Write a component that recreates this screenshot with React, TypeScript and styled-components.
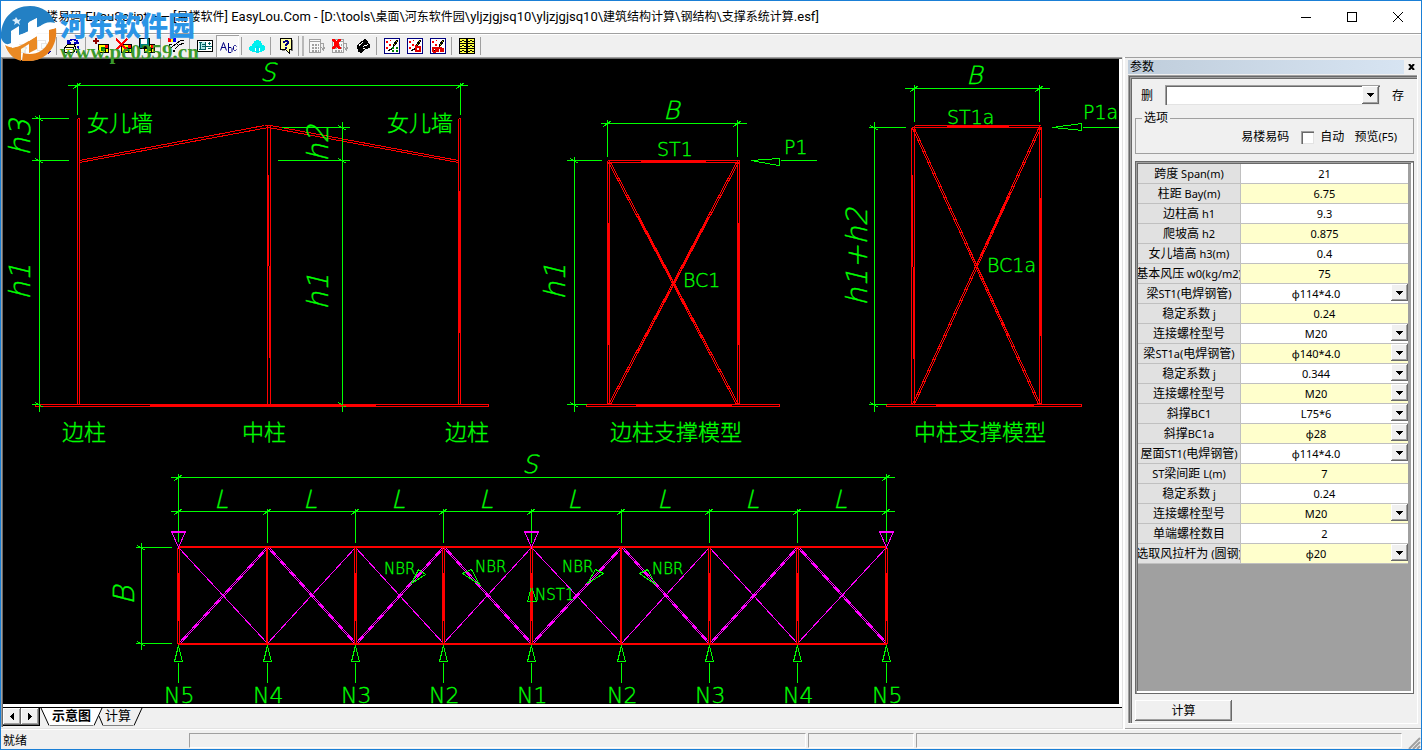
import React, { useState } from "react";
import styled, { createGlobalStyle, css } from "styled-components";

const GlobalStyle = createGlobalStyle`
  * { box-sizing: border-box; }
  body { margin: 0; background: #f0f0f0; }
  body, button, input, select, table {
    font-family: "Noto Sans", "Noto Sans CJK SC", sans-serif;
    font-size: 12px;
    color: #000;
  }
  button { padding: 0; border: 0; background: none; }
`;

const face = "#f0f0f0";
const shade = "#a0a0a0";
const dark = "#696969";

const raised = css`
  background: ${face};
  box-shadow: inset -1px -1px ${dark}, inset 1px 1px #fff, inset -2px -2px ${shade};
`;

/* ---------- window frame ---------- */

const Window = styled.div`
  min-height: 100vh;
  display: flex;
  flex-direction: column;
  border: 1px solid #1a7fd6;
  background: ${face};
`;

const TitleBar = styled.header`
  height: 32px;
  display: flex;
  align-items: center;
  justify-content: space-between;
  background: #fff;
`;

const Title = styled.h1`
  margin: 0;
  padding-left: 33px;
  font-family: Roboto, "Noto Sans CJK SC", sans-serif;
  font-size: 12px;
  line-height: 16px;
  font-weight: 400;
  white-space: nowrap;
  overflow: hidden;
`;

const WindowButtons = styled.div`
  display: flex;
  flex: none;
`;

const WindowButton = styled.button`
  width: 46px;
  height: 30px;
  display: grid;
  place-items: center;
`;

const Toolbar = styled.div`
  height: 24px;
  display: flex;
  align-items: center;
  padding-left: 7px;
  border-top: 1px solid ${shade};
  box-shadow: inset 0 1px #fff;
`;

const ToolButton = styled.button<{ $pressed?: boolean }>`
  width: 23px;
  height: 22px;
  display: grid;
  place-items: center;
  ${(p) => p.$pressed && css`
    background: #f8f8f8;
    box-shadow: inset 1px 1px ${shade}, inset -1px -1px #fff;
  `}
`;

const Separator = styled.span`
  width: 1px;
  height: 18px;
  margin: 0 3px 0 2px;
  background: ${shade};
`;

const Gripper = styled.span`
  width: 6px;
  height: 20px;
  margin: 0 1px;
  border-left: 1px solid ${shade};
  border-right: 2px solid #b8b8b8;
`;

const Workspace = styled.main`
  flex: 1;
  display: flex;
`;

/* ---------- drawing side ---------- */

const View = styled.section`
  flex: 1;
  min-width: 0;
  display: flex;
  flex-direction: column;
  border-right: 2px solid #fff;
  box-shadow: inset -1px 0 #e3e3e3, inset 0 -1px #e3e3e3;
  padding: 0 1px 2px 0;
`;

const Sunken = styled.div`
  flex: 1;
  display: flex;
  flex-direction: column;
  border: solid ${shade};
  border-width: 1px 0 0 1px;
  box-shadow: inset 1px 1px ${dark};
  padding: 1px 0 0 1px;
`;

const Paper = styled.div`
  flex: 1;
  background: #000;
  border: solid #fff;
  border-width: 0 3px 3px 0;
`;

const Drawing = styled.svg`
  display: block;
  width: 100%;
  overflow: visible;
  font-family: "DejaVu Sans", "Noto Sans CJK SC", sans-serif;
  font-weight: 200;
`;

const TabStrip = styled.nav`
  height: 20px;
  display: flex;
  border-top: 1px solid #000;
`;

const ScrollPair = styled.div`
  display: flex;
  height: 18px;
  border: solid #000;
  border-width: 0 1px 1px 0;
`;

const ScrollButton = styled.button`
  width: 18px;
  display: grid;
  place-items: center;
  ${raised}
`;

const Tab = styled.button<{ $active?: boolean }>`
  height: 18px;
  padding: 0 2px 2px;
  line-height: 15px;
  border-bottom: 1px solid #808080;
  background: ${(p) => (p.$active ? "#fff" : face)};
  font-weight: ${(p) => (p.$active ? 700 : 400)};
  font-size: 13px;
`;

/* ---------- parameter side ---------- */

const Panel = styled.aside`
  flex: none;
  width: 296px;
  display: flex;
  flex-direction: column;
  padding: 2px 3px 4px;
  border-top: 1px solid ${shade};
  border-bottom: 1px solid ${shade};
`;

const Caption = styled.div`
  height: 17px;
  display: flex;
  align-items: flex-start;
  justify-content: space-between;
`;

const CaptionText = styled.h2`
  flex: 1;
  margin: 0;
  padding-left: 2px;
  height: 14px;
  font-size: 12px;
  line-height: 14px;
  font-weight: 400;
  background: linear-gradient(90deg, #bfcddb, #d7e4f2);
`;

const CloseButton = styled.button`
  width: 14px;
  height: 14px;
  display: grid;
  place-items: center;
`;

const PanelBody = styled.form`
  flex: 1;
  display: flex;
  flex-direction: column;
  padding: 8px 3px 2px 7px;
  margin-top: -2px;
  border: solid #fff;
  border-width: 0 1px 1px 0;
  box-shadow: inset 1px 1px ${shade}, inset 2px 2px ${dark}, inset 3px 3px ${shade}, inset 4px 4px ${dark};
`;

const PresetRow = styled.div`
  display: flex;
  align-items: center;
  height: 24px;
  gap: 12px;
  padding: 0 10px 0 6px;
`;

const PresetBox = styled.div`
  position: relative;
  flex: 1;
  height: 20px;
  padding: 2px;
  background: #fff;
  box-shadow: inset 1px 1px ${shade}, inset 2px 2px ${dark}, inset -1px -1px #e3e3e3;
`;

const PresetSelect = styled.select`
  appearance: none;
  display: block;
  width: 100%;
  height: 16px;
  border: 0;
  background: none;
`;

const Arrow = styled.span`
  position: absolute;
  right: 0;
  top: 0;
  width: 17px;
  height: 17px;
  display: grid;
  place-items: center;
  pointer-events: none;
  ${raised}
  ${PresetBox} & { right: 1px; top: 1px; height: 18px; }
`;

const Options = styled.fieldset`
  margin: 3px 0 7px;
  padding: 1px 16px 7px 6px;
  height: 44px;
  min-width: 0;
  border: 1px solid ${shade};
`;

const Legend = styled.legend`
  padding: 0 2px;
  line-height: 16px;
`;

const OptionRow = styled.div`
  display: flex;
  justify-content: flex-end;
  align-items: center;
  gap: 10px;
  line-height: 20px;
  a { color: #000; text-decoration: none; margin-right: 2px; }
  label { display: flex; align-items: center; gap: 6px; }
  button { display: flex; line-height: 20px; }
`;

const TickBox = styled.input`
  appearance: none;
  width: 13px;
  height: 13px;
  margin: 0;
  background: #fff;
  box-shadow: inset 1px 1px ${shade}, inset 2px 2px ${dark}, inset -1px -1px #e3e3e3;
`;

const GridBox = styled.div`
  flex: 1;
  padding: 3px 6px 3px 3px;
  background: ${shade};
  box-shadow: inset 1px 1px ${dark}, inset -1px -1px ${dark}, inset 2px 2px ${shade},
    inset -3px -3px #fff, inset 3px 3px ${dark};
`;

const Grid = styled.table`
  width: 100%;
  border-collapse: separate;
  border-spacing: 0;
  table-layout: fixed;
  col:first-child { width: 103px; }
`;

const NameCell = styled.th`
  height: 20px;
  padding: 0;
  line-height: 19px;
  font-weight: 400;
  overflow: hidden;
  background: #e1e1e1;
  border: solid #c0c0c0;
  border-width: 0 1px 1px 0;
`;

/* keeps over-long names centred and clipped on both sides */
const Name = styled.label`
  display: flex;
  justify-content: center;
  align-items: center;
  height: 19px;
  white-space: pre;
`;

const Latin = styled.span<{ $size: number }>`
  font-size: ${(p) => p.$size}px;
`;

const ValueCell = styled.td<{ $tint: boolean }>`
  position: relative;
  height: 20px;
  padding: 0;
  background: ${(p) => (p.$tint ? "#ffffcc" : "#fff")};
  border-bottom: 1px solid #c0c0c0;
`;

const valueText = css`
  display: block;
  width: 100%;
  height: 19px;
  border: 0;
  margin: 0;
  background: none;
  font-size: 11px;
  line-height: 19px;
`;

const ValueInput = styled.input`
  ${valueText}
  padding: 0;
  text-align: center;
`;

const ValueSelect = styled.select`
  ${valueText}
  appearance: none;
  padding: 0 17px 0 0;
  text-align: center;
  text-align-last: center;
`;

const RunButton = styled.button`
  width: 97px;
  height: 21px;
  margin-top: 6px;
  padding-bottom: 1px;
  ${raised}
`;

/* ---------- status bar ---------- */

const StatusBar = styled.footer`
  height: 20px;
  display: flex;
  gap: 2px;
  padding: 3px 0 1px 2px;
  border-top: 1px solid #fff;
`;

const StatusText = styled.span`
  width: 184px;
  line-height: 16px;
`;

const Pane = styled.span<{ $width?: number }>`
  flex: ${(p) => (p.$width ? `0 0 ${p.$width}px` : "1")};
  border: 1px solid;
  border-color: ${shade} #fff #fff ${shade};
`;

const Grip = styled.svg`
  width: 17px;
  height: 16px;
  flex: none;
`;

/* ---------- site stamp over the title bar ---------- */

const Stamp = styled.div`
  position: absolute;
  left: 0;
  top: 5px;
  display: flex;
  gap: 3px;
  pointer-events: none;
`;

const StampText = styled.div`
  display: flex;
  flex-direction: column;
  padding-top: 3px;
`;

const StampName = styled.strong`
  font-family: "Noto Sans CJK SC", sans-serif;
  font-weight: 900;
  font-size: 27px;
  line-height: 33px;
  color: #2b95e6;
`;

const StampUrl = styled.strong`
  font-family: "Liberation Serif", serif;
  font-size: 21px;
  line-height: 22px;
  color: #3c9a2c;
`;

/* ---------- icons ---------- */

const Icon = ({ children, size = 16 }: { children: React.ReactNode; size?: number }) => (
  <svg width={size} height={size} viewBox="0 0 16 16" shapeRendering="crispEdges" aria-hidden="true">
    {children}
  </svg>
);

const DownMark = () => (
  <svg width="7" height="4" viewBox="0 0 7 4" shapeRendering="crispEdges" aria-hidden="true">
    <path d="M0 0h7v1h-1v1h-1v1h-1v1h-1v-1h-1v-1h-1v-1h-1z" />
  </svg>
);

const OpenIcon = () => (
  <Icon>
    <path d="M1 4h5l1 2h6v8H1z" fill="#ffff80" stroke="#000" />
    <path d="M3 14l3-5h9l-3 5z" fill="#c8c800" stroke="#000" />
  </Icon>
);

const FindIcon = () => (
  <Icon>
    <path d="M2 2h8v10H2z" fill="#fff" stroke="#000" />
    <circle cx="9" cy="8" r="3" fill="#aef" stroke="#000" />
    <path d="M11 11l4 4" stroke="#0000a0" strokeWidth="3" />
  </Icon>
);

const RefreshIcon = () => (
  <Icon>
    <path d="M0.5 9.5l3-3h8l-2 3z" fill="#ffffa0" stroke="#000" />
    <path d="M0.5 9.5h9v5h-9z" fill="#fff" stroke="#000" />
    <path d="M9.5 14.5l2-3v-4" fill="none" stroke="#000" />
    <path d="M2 11h6" stroke="#c8c800" />
    <path d="M5 4c1-3 6-3 8-1v3M10 5h5M14 8c1 3 0 5-2 6M4 2v3h3" stroke="#0000c0" strokeWidth="1.6" fill="none" />
  </Icon>
);

const Film = () => (
  <>
    <rect x="5" y="6" width="11" height="9" fill="#000" />
    <rect x="6" y="7" width="6" height="7" fill="#ffff00" />
    <rect x="8" y="9" width="4" height="4" fill="#008000" />
    <rect x="12" y="7" width="3" height="3" fill="#ff0000" />
    <rect x="13" y="11" width="2" height="3" fill="#ffff00" />
  </>
);

const AddIcon = () => (
  <Icon>
    <Film />
    <path d="M0 3h6M3 0v6" stroke="#900000" strokeWidth="2" />
  </Icon>
);

const RemoveIcon = () => (
  <Icon>
    <Film />
    <path d="M0 1l11 11M11 1L0 12" stroke="#ff0000" strokeWidth="2" />
  </Icon>
);

const SaveIcon = () => (
  <Icon>
    <Film />
    <rect x="0.5" y="0.5" width="10" height="10" fill="#008080" stroke="#000" />
    <rect x="2" y="1" width="6" height="5" fill="#fff" />
    <rect x="3" y="8" width="5" height="3" fill="#000" />
  </Icon>
);

const PaletteIcon = () => (
  <Icon>
    <path d="M0 0h3v4H0z" fill="#f00" />
    <path d="M3 0h2v4H3z" fill="#ff0" />
    <path d="M5 0h3v4H5z" fill="#00f" />
    <path d="M4 9L9 5l3-2 4-1M7 11l4-4 5-2M8 5l3 3" stroke="#000" fill="none" />
    <path d="M1 6h3v1H2v2h2v1H1zM1 12h2v2H1zM5 12h2v2H5z" fill="#000" />
  </Icon>
);

const FormIcon = () => (
  <Icon>
    <rect x="0.5" y="2.5" width="15" height="11" fill="#fff" stroke="#000" />
    <path d="M2 4h7v8H2z" fill="#b0e8e8" />
    <path d="M2 4.5h3M3.5 4v8M2 11.5h7M5 6.5h4M5 8.5h4M8.5 4v8" stroke="#006060" />
    <path d="M9 8.5h6M11 5.5h3M12.5 4v3M11 10.5h3" stroke="#006060" />
  </Icon>
);

const AbcIcon = () => (
  <svg width="20" height="16" viewBox="0 0 20 16" fill="none" stroke="#000080" aria-hidden="true">
    <path d="M2.500 12.500l3-8 3 8M3.500 9.500h4" />
    <path d="M10.500 5v9.500h2.500l1-1v-3l-1-1h-2.500" />
    <path d="M18.500 8.500l-1-1h-1l-1 1v3l1 1h1l1-1" />
  </svg>
);

const CloudIcon = () => (
  <Icon>
    <path d="M3 14v-1H1v-1H0V9h1V8h2V6h1V5h1V3h2V2h3v1h2v2h1v2h2v1h1v1h0v3h-1v1h-2v1H9v-3H7v3z" fill="#00f0f0" />
    <path d="M7 8h3v7H7z" fill="#00e0f0" />
    <path d="M6.500 10v3M10.500 10v3" stroke="#fff" />
  </Icon>
);

const HelpIcon = () => (
  <Icon>
    <path d="M2.500 0.500h11v11h-2v4l-4-4h-5z" fill="#ffffa0" stroke="#000" />
    <path d="M14 2h1v11h-2v-1h1zM4 12h3v1H4z" fill="#808080" />
    <path d="M5 3h2V2h3v1h1v3h-1v1H9v1H7V6h1V5h1V4H7v1H5zM7 9h2v2H7z" fill="#000080" />
  </Icon>
);

const Sheet = () => (
  <>
    <rect x="0.5" y="1.5" width="11" height="13" fill="#f8f8f8" stroke={shade} />
    <path d="M1 3.500h10" stroke={shade} />
    <path d="M3 6.500h7M3 9.500h7M3 12.500h7" stroke={shade} strokeWidth="2" strokeDasharray="2 1" />
    <path d="M12 5.500h2.500v6M12.500 9.500l2 3 1-3" stroke={shade} fill="none" />
  </>
);

const SheetIcon = () => <Icon><Sheet /></Icon>;

const SheetDeleteIcon = () => (
  <Icon>
    <Sheet />
    <path d="M1 1l7 10M8 1L1 11" stroke="#ff0000" strokeWidth="3" />
  </Icon>
);

const CameraIcon = () => (
  <Icon>
    <path d="M2 7l5-4 3-2 3 2v2l2 1v4l-4 1-5 4-3-1z" fill="#000" />
    <path d="M4 7.500l4-3M8 8.500l5-2M8 11l2-1" stroke="#fff" fill="none" />
  </Icon>
);

const SketchIcon = ({ mark }: { mark?: string }) => (
  <Icon>
    <rect x="0.5" y="0.5" width="15" height="15" fill="#fff" stroke="#000080" />
    <path d="M2 3h2v2H2zM5 6h2v2H5zM2 9h2v2H2zM6 2h1v1H6z" fill="#ff0000" />
    <path d="M9 7l4-5 1 1-4 5z" fill="#c8c800" stroke="#000" />
    <path d="M4 12.500l3-1 3-4" stroke="#000" fill="none" />
    {!mark && <path d="M8 9h2v2H8zM12 9h2v2h-2zM8 12h2v2H8zM12 12h2v2h-2z" fill="#008000" />}
    {mark === "b" && <path d="M9 7v6h4V9H9" stroke="#e00000" strokeWidth="2" fill="none" />}
    {mark === "m" && <path d="M3 14v-4h3v4M8 14v-4h3v4M13 14v-4M3 14h3" stroke="#e00000" strokeWidth="2" fill="none" />}
  </Icon>
);

const TilesIcon = () => (
  <Icon>
    <rect width="16" height="16" fill="#000" />
    {[1, 9].map((x) =>
      [1, 6, 11].map((y) => (
        <g key={`${x}-${y}`}>
          <rect x={x} y={y} width="6" height="4" fill="#ffff40" />
          <path d={`M${x} ${y + 2}h2v1h-2zM${x + 2} ${y + 1}h2v1h-2zM${x + 4} ${y + 2}h2v1h-2z`} fill="#000" />
        </g>
      ))
    )}
  </Icon>
);

const StampLogo = () => (
  <svg width="57" height="57" viewBox="0 0 57 57" aria-hidden="true">
    <circle cx="28" cy="29" r="27" fill="#fff" fillOpacity="0.9" />
    <path d="M1 33C0 14 13 1 30 1c12 0 22 7 25 17-6-2-11 0-16 4l-2 1V13l-9 5v9l-9 3v-9l-8 5v12c-3 2-7 2-10-5z" fill="#2380c4" />
    <path d="M5 40c6 4 13 3 22-3l10-6v13l-8 4v-9l-8 5v12C14 54 8 49 5 40z" fill="#ea8a24" />
    <path d="M56 23c2 18-9 32-26 33h-8l1-8c11 3 21-1 26-12v-11z" fill="#e8821c" />
    <path d="M16 12l2 3 3-1-2 3 1 3-3-2-3 2 1-3-3-2 3-1z" fill="#d9ecfa" />
    <path d="M12 26l7-4v19l-7 2zM29 17l8-4v18l-8 5z" fill="#fff" />
    <path d="M12 31c9 1 18-7 29-10 6-2 10 0 14 3-8-1-14 2-21 6-8 5-15 9-22 8z" fill="#fff" />
  </svg>
);

/* ---------- structural drawing ---------- */

type Seg = [number, number, number, number];
type Note = [number, number, string];

const G = "#00ff00";
const R = "#ff0000";
const M = "#ff00ff";

const nodes = [178, 267, 355, 443, 531, 621, 709, 797, 886];
const nodeNames = ["N5", "N4", "N3", "N2", "N1", "N2", "N3", "N4", "N5"];

const segPath = (list: Seg[]) => list.map(([a, b, c, d]) => `M${a} ${b}L${c} ${d}`).join("");

/* dimension lines with their witness lines */
const dimensions: Seg[] = [
  [67, 85, 467, 85], [77, 82, 77, 114], [460, 82, 460, 114],
  [39, 114, 39, 411], [31, 118, 68, 118], [31, 160, 68, 160], [31, 404, 39, 404],
  [342, 121, 342, 411], [281, 127, 349, 127], [277, 160, 349, 160],
  [600, 123, 746, 123], [607, 119, 607, 156], [737, 119, 737, 156],
  [574, 156, 574, 411], [566, 160, 601, 160], [566, 404, 586, 404],
  [904, 88, 1049, 88], [914, 84, 914, 121], [1039, 84, 1039, 121],
  [874, 121, 874, 411], [868, 127, 905, 127], [868, 404, 886, 404],
  [170, 477, 894, 477], [170, 511, 894, 511], [178, 473, 178, 541], [886, 473, 886, 541],
  [141, 542, 141, 649], [135, 547, 171, 547], [135, 643, 171, 643],
  [780, 160, 816, 160], [1082, 127, 1118, 127],
  ...nodes.slice(1, -1).map((x): Seg => [x, 508, x, 542]),
  ...nodes.map((x): Seg => [x, 662, x, 682]),
];

const risingTicks = [
  [77, 85], [460, 85], [607, 123], [737, 123], [914, 88], [1039, 88], [178, 477], [886, 477],
  ...nodes.map((x) => [x, 511]),
];
const fallingTicks = [
  [39, 118], [39, 160], [39, 404], [342, 127], [342, 160], [342, 404],
  [574, 160], [574, 404], [874, 127], [874, 404], [141, 547], [141, 643],
];

/* members drawn as two parallel lines */
const members: Seg[] = [
  [77, 118, 77, 404], [79, 118, 79, 404], [77, 118, 79, 118],
  [458, 118, 458, 404], [460, 118, 460, 404], [458, 118, 460, 118],
  [267, 125, 267, 404], [270, 125, 270, 404],
  [79, 160, 264, 125], [79, 162, 268, 127], [264, 125, 270, 125], [270, 125, 458, 160], [268, 127, 458, 162],
  [35, 404, 488, 404], [35, 406, 488, 406], [35, 404, 35, 406], [488, 404, 488, 406],
  [607, 160, 739, 160], [607, 162, 739, 162], [607, 160, 607, 404], [609, 160, 609, 404],
  [737, 160, 737, 404], [739, 160, 739, 404],
  [608, 162, 736, 404], [610, 162, 738, 404], [736, 162, 608, 404], [738, 162, 610, 404],
  [586, 404, 779, 404], [586, 406, 779, 406], [586, 404, 586, 406], [779, 404, 779, 406],
  [914, 125, 1040, 125], [911, 127, 1041, 127], [911, 127, 911, 404], [914, 125, 914, 404],
  [1039, 125, 1039, 404], [1041, 127, 1041, 404],
  [912, 128, 1038, 404], [914, 128, 1040, 404], [1038, 128, 912, 404], [1040, 128, 914, 404],
  [886, 404, 1081, 404], [886, 406, 1081, 406], [886, 404, 886, 406], [1081, 404, 1081, 406],
  [177, 546, 886, 546], [177, 547, 886, 547], [177, 643, 886, 643], [177, 644, 886, 644],
  ...nodes.flatMap((x): Seg[] => {
    const right = x === 267 || x === 621 ? x : x + 1;
    return [[x - 1, 547, x - 1, 643], [right, 547, right, 643]];
  }),
];

/* stretches where the two lines run together */
const solids: Seg[] = [
  [459, 190, 459, 332], [268, 174, 268, 265], [269, 265, 269, 357], [149, 405, 375, 405],
  [640, 161, 705, 161], [608, 222, 608, 344], [738, 222, 738, 344], [635, 405, 731, 405],
  [946, 126, 1008, 126], [912, 174, 912, 266], [913, 266, 913, 358], [1040, 197, 1040, 335],
  [935, 405, 1033, 405],
  [638, 217, 709, 350], [708, 217, 638, 350],
  [968, 247, 1008, 335], [1010, 192, 976, 265],
  ...nodes.map((x): Seg => [x, 572, x, 620]),
];

const braces: Seg[] = nodes.slice(0, -1).flatMap((x, i): Seg[] => {
  const next = nodes[i + 1];
  return i % 2 === 0
    ? [[x, 547, next, 643], [x, 643, next - 1, 547], [x + 2, 643, next, 548]]
    : [[x, 643, next, 547], [x, 547, next - 1, 643], [x + 2, 547, next, 642]];
});

const arrowHeads = [
  "M751 160L779 158V165L772 164Z", "M1052 127L1081 123V130L1073 129Z",
  "M411 583L418 569L425 574Z", "M479 584L462 573L471 569Z",
  "M587 583L595 569L603 573Z", "M655 584L639 573L647 569Z", "M531 586L527 601H536Z",
  ...nodes.map((x) => `M${x} 645L${x - 4} 661H${x + 4}Z`),
].join("");

const loads = [178, 531, 886].map((x) => `M${x - 7} 531H${x + 7}L${x} 547ZM${x - 7} 532H${x + 7}`).join("");

const chineseNotes: Note[] = [
  [87, 131, "女儿墙"], [387, 131, "女儿墙"], [62, 440, "边柱"], [242, 440, "中柱"], [445, 440, "边柱"],
  [610, 440, "边柱支撑模型"], [914, 440, "中柱支撑模型"],
];
const notes: Note[] = [
  [657, 156, "ST1"], [784, 154, "P1"], [683, 287, "BC1"], [947, 124, "ST1a"], [1083, 119, "P1a"], [987, 272, "BC1a"],
];
const smallNotes: Note[] = [
  [384, 574, "NBR"], [475, 572, "NBR"], [562, 572, "NBR"], [652, 574, "NBR"], [535, 600, "NST1"],
];
const slanted: Note[] = [
  [260, 81, "S"], [663, 119, "B"], [966, 84, "B"], [522, 473, "S"],
  ...nodes.slice(0, -1).map((x): Note => [x + 36, 508, "L"]),
];
const upright: Note[] = [
  [30, 156, "h3"], [30, 300, "h1"], [328, 162, "h2"], [328, 310, "h1"],
  [565, 300, "h1"], [867, 306, "h1+h2"], [134, 605, "B"],
];

const slantedFont = '"DejaVu Sans Light", "DejaVu Sans ExtraLight", Inter, Roboto, sans-serif';

const Structure = () => (
  <Drawing viewBox="3 59 1116 645" role="img" aria-label="支撑系统示意图">
    <g transform="translate(0.5 0.5)" fill="none" strokeWidth="1" shapeRendering="crispEdges">
      <path d={segPath(braces)} stroke={M} />
      <path d={segPath(members)} stroke={R} />
      <path d={segPath(dimensions)} stroke={G} />
      <path d={risingTicks.map(([x, y]) => `M${x - 4} ${y + 3}l8 -6`).join("")} stroke={G} />
      <path d={fallingTicks.map(([x, y]) => `M${x - 4} ${y - 2}l8 5`).join("")} stroke={G} />
      <path d={arrowHeads} stroke={G} />
      <path d={segPath(solids)} stroke={R} />
      <path d={loads} stroke={M} />
    </g>
    <g fill={G} stroke={G} strokeWidth="0.3">
      {chineseNotes.map(([x, y, t], i) => (
        <text key={i} x={x} y={y} fontSize="22" fontFamily="Noto Sans CJK SC, sans-serif" fontWeight="300">{t}</text>
      ))}
      {notes.map(([x, y, t]) => <text key={t} x={x} y={y} fontSize="19">{t}</text>)}
      {smallNotes.map(([x, y, t], i) => <text key={i} x={x} y={y} fontSize="15">{t}</text>)}
      {nodes.map((x, i) => <text key={x} x={x - 14} y="703" fontSize="22">{nodeNames[i]}</text>)}
      {slanted.map(([x, y, t], i) => (
        <text key={i} x={x} y={y} fontSize="25" fontStyle="italic" fontFamily={slantedFont}>{t}</text>
      ))}
      {upright.map(([x, y, t], i) => (
        <text key={i} transform={`translate(${x} ${y}) rotate(-90)`} fontSize="29" fontStyle="italic" fontFamily={slantedFont}>{t}</text>
      ))}
    </g>
  </Drawing>
);

/* ---------- parameter data ---------- */

type Param = { name: string; value: string; list?: boolean };

const params: Param[] = [
  { name: "跨度 Span(m)", value: "21" },
  { name: "柱距 Bay(m)", value: "6.75" },
  { name: "边柱高 h1", value: "9.3" },
  { name: "爬坡高 h2", value: "0.875" },
  { name: "女儿墙高 h3(m)", value: "0.4" },
  { name: "基本风压 w0(kg/m2)", value: "75" },
  { name: "梁ST1(电焊钢管)", value: "φ114*4.0", list: true },
  { name: "稳定系数 j", value: "0.24" },
  { name: "连接螺栓型号", value: "M20", list: true },
  { name: "梁ST1a(电焊钢管)", value: "φ140*4.0", list: true },
  { name: "稳定系数 j", value: "0.344", list: true },
  { name: "连接螺栓型号", value: "M20", list: true },
  { name: "斜撑BC1", value: "L75*6", list: true },
  { name: "斜撑BC1a", value: "φ28", list: true },
  { name: "屋面ST1(电焊钢管)", value: "φ114*4.0", list: true },
  { name: "ST梁间距 L(m)", value: "7" },
  { name: "稳定系数 j", value: "0.24" },
  { name: "连接螺栓型号", value: "M20", list: true },
  { name: "单端螺栓数目", value: "2" },
  { name: "选取风拉杆为 (圆钢)", value: "φ20", list: true },
];

/* Latin runs take their own size beside the 12px Chinese ones */
const Mixed = ({ text, size = 11 }: { text: string; size?: number }) => (
  <>
    {text.split(/([\x20-\x7e]+)/).filter(Boolean).map((run, i) =>
      /^[\x20-\x7e]/.test(run) ? <Latin key={i} $size={size}>{run}</Latin> : <span key={i}>{run}</span>
    )}
  </>
);

const ParamTable = () => (
  <Grid>
    <colgroup><col /><col /></colgroup>
    <tbody>
      {params.map((p, i) => (
        <tr key={i}>
          <NameCell scope="row">
            <Name htmlFor={`param-${i}`}><Mixed text={p.name} /></Name>
          </NameCell>
          <ValueCell $tint={i % 2 === 1}>
            {p.list ? (
              <>
                <ValueSelect id={`param-${i}`} defaultValue={p.value}><option>{p.value}</option></ValueSelect>
                <Arrow><DownMark /></Arrow>
              </>
            ) : (
              <ValueInput id={`param-${i}`} defaultValue={p.value} />
            )}
          </ValueCell>
        </tr>
      ))}
    </tbody>
  </Grid>
);

const toolGroups: [string, React.ReactNode, boolean?][][] = [
  [["打开", <OpenIcon />], ["查找", <FindIcon />]],
  [["刷新", <RefreshIcon />]],
  [["添加", <AddIcon />], ["删除", <RemoveIcon />], ["保存", <SaveIcon />]],
  [["颜色", <PaletteIcon />]],
  [["表单", <FormIcon />], ["文字", <AbcIcon />, true]],
  [["云端", <CloudIcon />]],
  [["帮助", <HelpIcon />]],
];

const scriptGroups: [string, React.ReactNode, boolean?][][] = [
  [["表格", <SheetIcon />], ["删除表格", <SheetDeleteIcon />], ["截图", <CameraIcon />]],
  [["草图", <SketchIcon />], ["草图块", <SketchIcon mark="b" />], ["草图模型", <SketchIcon mark="m" />]],
  [["平铺", <TilesIcon />]],
];

const Tools = ({ groups }: { groups: typeof toolGroups }) => (
  <>
    {groups.map((group, i) => (
      <React.Fragment key={i}>
        {i > 0 && <Separator />}
        {group.map(([label, icon, pressed]) => (
          <ToolButton key={label} aria-label={label} $pressed={pressed}>{icon}</ToolButton>
        ))}
      </React.Fragment>
    ))}
  </>
);

const Slant = ({ d, fill, fillPath }: { d: string; fill: string; fillPath: string }) => (
  <svg width="10" height="18" viewBox="0 0 10 18" aria-hidden="true">
    <path d={fillPath} fill={fill} />
    <path d={d} stroke="#000" fill="none" />
  </svg>
);

export default function App() {
  const [auto, setAuto] = useState(false);
  return (
    <>
      <GlobalStyle />
      <Window>
        <TitleBar>
          <Title>
            <Mixed
              size={13}
              text="易楼易码 ELouScript —— [易楼软件] EasyLou.Com - [D:\tools\桌面\河东软件园\yljzjgjsq10\yljzjgjsq10\建筑结构计算\钢结构\支撑系统计算.esf]"
            />
          </Title>
          <WindowButtons>
            <WindowButton aria-label="最小化">
              <svg width="10" height="10" shapeRendering="crispEdges"><path d="M0 5.5h10" stroke="#000" /></svg>
            </WindowButton>
            <WindowButton aria-label="最大化">
              <svg width="10" height="10" shapeRendering="crispEdges"><rect x="0.5" y="0.5" width="9" height="9" fill="none" stroke="#000" /></svg>
            </WindowButton>
            <WindowButton aria-label="关闭">
              <svg width="10" height="10"><path d="M0 0l10 10M10 0L0 10" stroke="#000" /></svg>
            </WindowButton>
          </WindowButtons>
        </TitleBar>
        <Toolbar>
          <Tools groups={toolGroups} />
          <Gripper />
          <Tools groups={scriptGroups} />
          <Separator />
        </Toolbar>
        <Workspace>
          <View>
            <Sunken>
              <Paper><Structure /></Paper>
              <TabStrip>
                <ScrollPair>
                  <ScrollButton aria-label="向左">
                    <svg width="4" height="7" shapeRendering="crispEdges"><path d="M4 0v7L0 3.5z" /></svg>
                  </ScrollButton>
                  <ScrollButton aria-label="向右">
                    <svg width="4" height="7" shapeRendering="crispEdges"><path d="M0 0v7l4-3.5z" /></svg>
                  </ScrollButton>
                </ScrollPair>
                <Slant d="M1 0l8 17.5" fill="#fff" fillPath="M1 0h9v18H9z" />
                <Tab type="button" $active>示意图</Tab>
                <Slant d="M9 0L1 17.5M6 8l4 9.5" fill="#fff" fillPath="M0 0h9L1 18H0z" />
                <Tab type="button">计算</Tab>
                <Slant d="M9 0L1 17.5" fill={face} fillPath="M0 0h9L1 18H0z" />
              </TabStrip>
            </Sunken>
          </View>
          <Panel>
            <Caption>
              <CaptionText>参数</CaptionText>
              <CloseButton aria-label="关闭参数">
                <svg width="7" height="6"><path d="M1 0l5 6M6 0L1 6" stroke="#000" strokeWidth="2" /></svg>
              </CloseButton>
            </Caption>
            <PanelBody onSubmit={(e) => e.preventDefault()}>
              <PresetRow>
                <button type="button">删</button>
                <PresetBox>
                  <PresetSelect aria-label="方案"><option></option></PresetSelect>
                  <Arrow><DownMark /></Arrow>
                </PresetBox>
                <button type="button">存</button>
              </PresetRow>
              <Options>
                <Legend>选项</Legend>
                <OptionRow>
                  <a href="#code">易楼易码</a>
                  <label>
                    <TickBox type="checkbox" checked={auto} onChange={(e) => setAuto(e.target.checked)} />
                    自动
                  </label>
                  <button type="button"><Mixed text="预览(F5)" /></button>
                </OptionRow>
              </Options>
              <GridBox><ParamTable /></GridBox>
              <RunButton type="submit">计算</RunButton>
            </PanelBody>
          </Panel>
        </Workspace>
        <StatusBar>
          <StatusText>就绪</StatusText>
          <Pane />
          <Pane $width={106} />
          <Pane $width={486} />
          <Grip viewBox="0 0 17 16">
            <path d="M5 16L16 5M9 16l7-7M13 16l3-3" stroke={shade} strokeWidth="2" />
          </Grip>
        </StatusBar>
      </Window>
      <Stamp>
        <StampLogo />
        <StampText>
          <StampName>河东软件园</StampName>
          <StampUrl>www.pc0359.cn</StampUrl>
        </StampText>
      </Stamp>
    </>
  );
}
